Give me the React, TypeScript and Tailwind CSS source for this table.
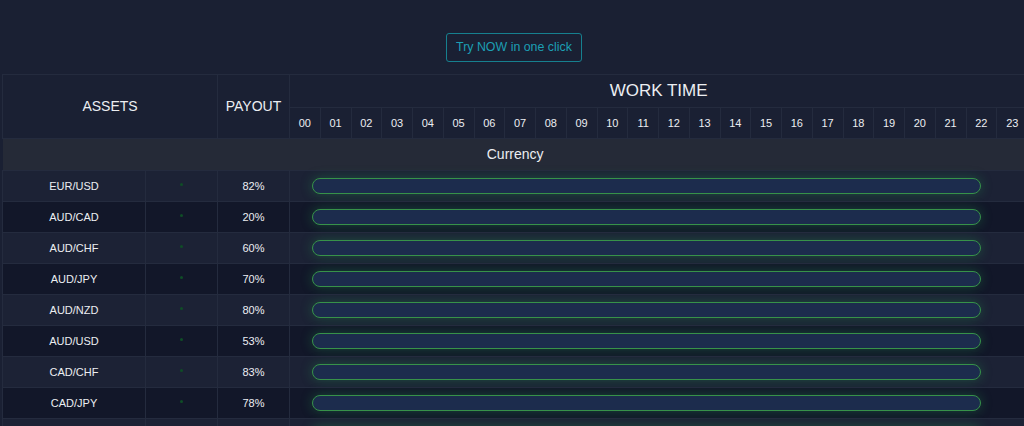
import React from 'react';

const hours = Array.from({ length: 24 }, (_, i) => String(i).padStart(2, '0'));

const assets = [
  { name: 'EUR/USD', payout: '82%' },
  { name: 'AUD/CAD', payout: '20%' },
  { name: 'AUD/CHF', payout: '60%' },
  { name: 'AUD/JPY', payout: '70%' },
  { name: 'AUD/NZD', payout: '80%' },
  { name: 'AUD/USD', payout: '53%' },
  { name: 'CAD/CHF', payout: '83%' },
  { name: 'CAD/JPY', payout: '78%' },
];

const App = () => {
  return (
    <div className="w-screen h-[426px] overflow-hidden bg-[#1a2033] text-[#eceef2] font-['Liberation_Sans',Arial,sans-serif]">
      {/* Botón */}
      <div className="flex justify-center pt-[33px] pb-[12px] pl-[4px]">
        <button className="h-[29px] px-[9px] rounded-[3px] border border-[#16808f] text-[#1c9fb3] text-[12.4px] leading-none">
          Try NOW in one click
        </button>
      </div>

      {/* Tabla */}
      <table className="ml-[2px] w-[1026px] table-fixed border-collapse">
        <colgroup>
          <col className="w-[143px]" />
          <col className="w-[72px]" />
          <col className="w-[72px]" />
          {hours.map((h) => (
            <col key={h} className="w-[30.75px]" />
          ))}
        </colgroup>
        <thead>
          <tr className="h-[33px]">
            <th colSpan={2} rowSpan={2} className="border border-[#242b3e] text-[14px] font-normal">
              ASSETS
            </th>
            <th rowSpan={2} className="border border-[#242b3e] text-[14px] font-normal">
              PAYOUT
            </th>
            <th colSpan={24} className="border border-[#242b3e] text-[17px] font-normal">
              WORK TIME
            </th>
          </tr>
          <tr className="h-[31px]">
            {hours.map((h) => (
              <th key={h} className="border border-[#242b3e] text-[11px] font-normal">
                {h}
              </th>
            ))}
          </tr>
        </thead>
        <tbody>
          <tr className="h-[32px] bg-[#252a37]">
            <td colSpan={27} className="border-y border-[#242b3e] text-center text-[14px]">
              Currency
            </td>
          </tr>
          {assets.map((a, i) => (
            <tr key={a.name} className={`h-[31px] ${i % 2 === 0 ? 'bg-[#1c2235]' : 'bg-[#121729]'}`}>
              <td className="border border-[#242b3e] text-center text-[11px]">{a.name}</td>
              <td className="border border-[#242b3e]">
                <div className="flex justify-center -mt-[3px]">
                  <span className="w-[3px] h-[3px] rounded-full bg-[#0f4d27]" />
                </div>
              </td>
              <td className="border border-[#242b3e] text-center text-[11px]">{a.payout}</td>
              <td colSpan={24} className="border-y border-l border-[#242b3e] p-0">
                <div className="ml-[22px] w-[669px] h-[16px] rounded-full border border-[#379249] bg-[#1c2c4d] shadow-[0_0_12px_rgba(34,160,80,0.35)]" />
              </td>
            </tr>
          ))}
          {/* fila cortada al final */}
          <tr className="h-[31px] bg-[#1c2235]">
            <td className="border border-[#242b3e]" />
            <td className="border border-[#242b3e]" />
            <td className="border border-[#242b3e]" />
            <td colSpan={24} className="border-y border-l border-[#242b3e] p-0">
              <div className="ml-[22px] w-[669px] h-[16px] rounded-full border border-[#379249] bg-[#1c2c4d] shadow-[0_0_12px_rgba(34,160,80,0.35)]" />
            </td>
          </tr>
        </tbody>
      </table>
    </div>
  );
};

export default App;
